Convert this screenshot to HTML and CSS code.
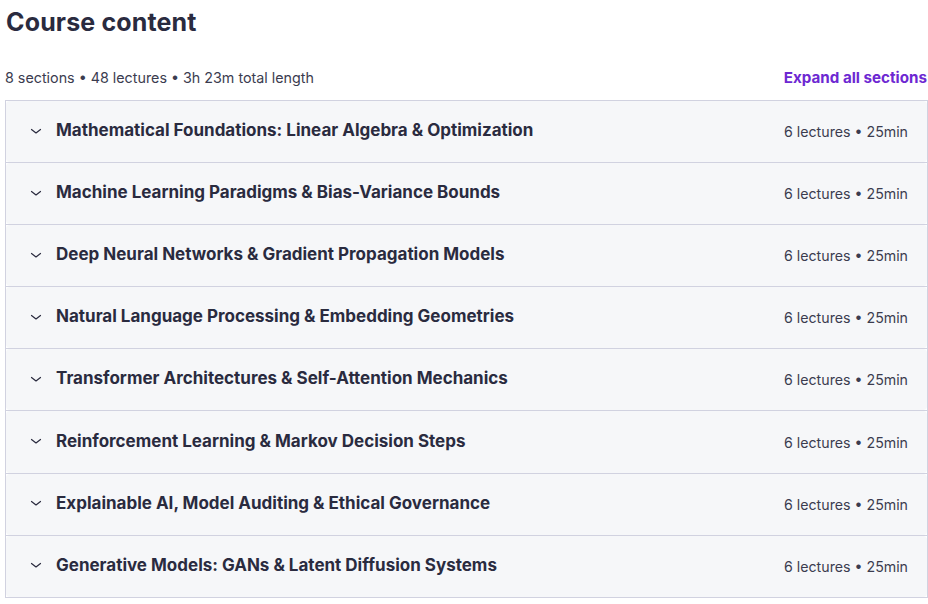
FILE: index.html
```html
<!DOCTYPE html>
<html>
<head>
<meta charset="utf-8">
<link rel="stylesheet" href="styles.css">
</head>
<body>
<div class="page">
  <h2 class="title">Course content</h2>
  <div class="summary">
    <span class="stats">8 sections • 48 lectures • 3h 23m total length</span>
    <button class="expand">Expand all sections</button>
  </div>
  <div class="sections">
    <div class="section"><div class="panel"><svg class="chev" viewBox="0 0 12 12"><path d="M1.5 4.5 L6 8 L10.5 4.5"/></svg><span class="name">Mathematical Foundations: Linear Algebra &amp; Optimization</span><span class="meta">6 lectures • 25min</span></div></div>
    <div class="section"><div class="panel"><svg class="chev" viewBox="0 0 12 12"><path d="M1.5 4.5 L6 8 L10.5 4.5"/></svg><span class="name">Machine Learning Paradigms &amp; Bias-Variance Bounds</span><span class="meta">6 lectures • 25min</span></div></div>
    <div class="section"><div class="panel"><svg class="chev" viewBox="0 0 12 12"><path d="M1.5 4.5 L6 8 L10.5 4.5"/></svg><span class="name">Deep Neural Networks &amp; Gradient Propagation Models</span><span class="meta">6 lectures • 25min</span></div></div>
    <div class="section"><div class="panel"><svg class="chev" viewBox="0 0 12 12"><path d="M1.5 4.5 L6 8 L10.5 4.5"/></svg><span class="name">Natural Language Processing &amp; Embedding Geometries</span><span class="meta">6 lectures • 25min</span></div></div>
    <div class="section"><div class="panel"><svg class="chev" viewBox="0 0 12 12"><path d="M1.5 4.5 L6 8 L10.5 4.5"/></svg><span class="name">Transformer Architectures &amp; Self-Attention Mechanics</span><span class="meta">6 lectures • 25min</span></div></div>
    <div class="section"><div class="panel"><svg class="chev" viewBox="0 0 12 12"><path d="M1.5 4.5 L6 8 L10.5 4.5"/></svg><span class="name">Reinforcement Learning &amp; Markov Decision Steps</span><span class="meta">6 lectures • 25min</span></div></div>
    <div class="section"><div class="panel"><svg class="chev" viewBox="0 0 12 12"><path d="M1.5 4.5 L6 8 L10.5 4.5"/></svg><span class="name">Explainable AI, Model Auditing &amp; Ethical Governance</span><span class="meta">6 lectures • 25min</span></div></div>
    <div class="section"><div class="panel"><svg class="chev" viewBox="0 0 12 12"><path d="M1.5 4.5 L6 8 L10.5 4.5"/></svg><span class="name">Generative Models: GANs &amp; Latent Diffusion Systems</span><span class="meta">6 lectures • 25min</span></div></div>
  </div>
</div>
</body>
</html>
```

FILE: styles.css
```css
* { box-sizing: border-box; }
html, body { margin: 0; padding: 0; background: #ffffff; }
body {
  font-family: Inter, "Noto Sans", sans-serif;
  color: #2a2b3f;
}
.page {
  padding: 4px 0 0 5px;
  width: 928px;
}
.title {
  margin: 0 0 0 1px;
  font-size: 25px;
  font-weight: 700;
  line-height: 36px;
  letter-spacing: 0.15px;
  color: #2a2b3f;
}
.summary {
  display: flex;
  justify-content: space-between;
  align-items: center;
  margin-top: 27px;
  height: 20px;
  margin-bottom: 13px;
}
.stats {
  font-size: 14.3px;
  color: #3b3c4f;
}
.expand {
  border: 0;
  background: none;
  padding: 0;
  margin: 0 1px 0 0;
  font-family: inherit;
  font-size: 15.2px;
  font-weight: 700;
  color: #6d28d2;
  cursor: pointer;
}
.sections {
  border: 1px solid #d1d2e0;
  border-bottom: 0;
}
.section {
  border-bottom: 1px solid #d1d2e0;
  height: 62.1px;
}
.panel {
  height: 100%;
  display: flex;
  align-items: center;
  background: #f6f7f9;
  border-radius: 4px;
  padding: 0 19px 0 24px;
}
.chev {
  width: 12px;
  height: 12px;
  flex: none;
  fill: none;
  stroke: #2a2b3f;
  stroke-width: 1.2;
  stroke-linecap: round;
  stroke-linejoin: round;
  margin-right: 14px;
  margin-top: -2px;
}
.name {
  flex: 1;
  font-size: 17px;
  font-weight: 700;
  margin-top: -3px;
}
.meta {
  font-size: 14.2px;
  color: #3b3c4f;
}
```
